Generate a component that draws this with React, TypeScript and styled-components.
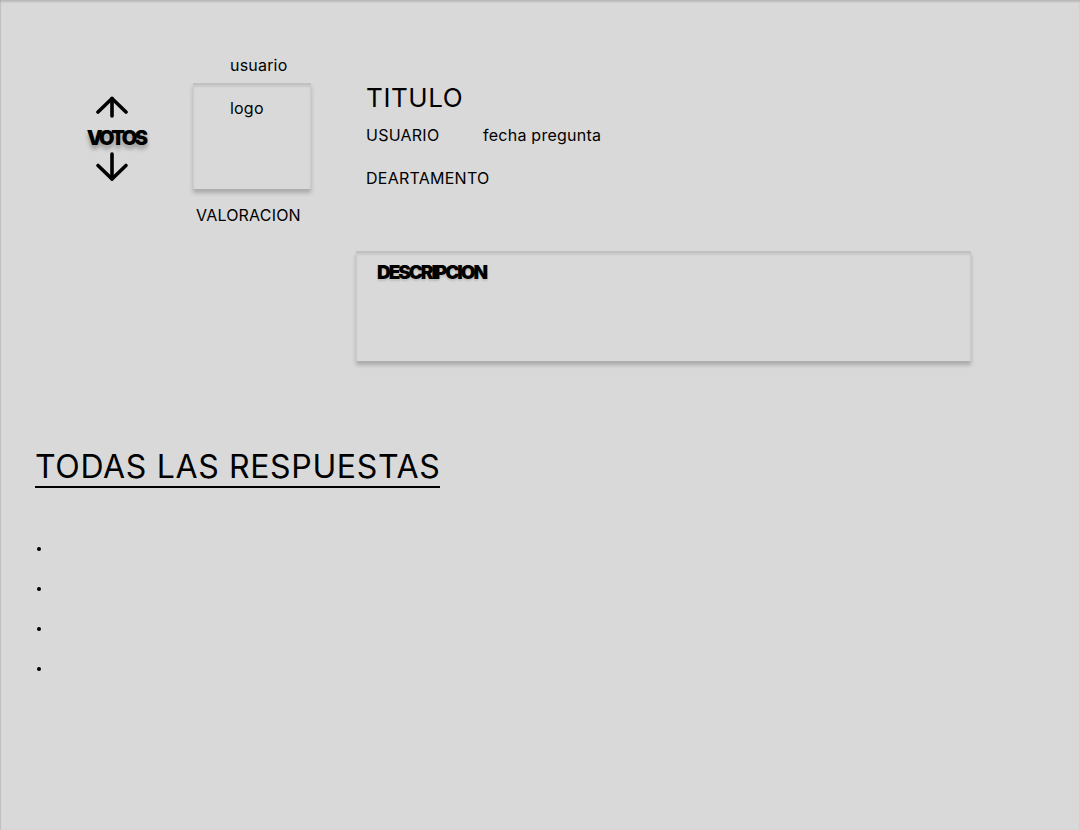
import styled, { createGlobalStyle } from 'styled-components';

const GlobalStyle = createGlobalStyle`
  html, body {
    margin: 0;
    padding: 0;
    background: #d9d9d9;
  }
  body {
    font-family: Inter, "Noto Sans", sans-serif;
    color: #000;
  }
`;

const Page = styled.div`
  width: 1080px;
  height: 830px;
  box-sizing: border-box;
  padding-top: 56px;
  background: #d9d9d9;
  box-shadow: inset 0 2px 2px rgba(0, 0, 0, 0.14), inset 1px 0 1px rgba(0, 0, 0, 0.08);
  overflow: hidden;
`;

const Header = styled.div`
  display: flex;
  align-items: flex-start;
`;

const VoteColumn = styled.div`
  display: flex;
  flex-direction: column;
  align-items: center;
  margin: 40px 0 0 82px;
  width: 60px;
`;

const VoteLabel = styled.span`
  font-size: 20px;
  font-weight: 900;
  letter-spacing: -2.6px;
  line-height: 24px;
  margin: 8px 0 2px 8px;
  text-shadow: 0 4px 4px rgba(0, 0, 0, 0.3);
`;

const UserColumn = styled.div`
  display: flex;
  flex-direction: column;
  margin-left: 51px;
  width: 118px;
`;

const SmallText = styled.span<{ $indent?: number }>`
  font-size: 16px;
  line-height: 19px;
  letter-spacing: 0.2px;
  padding-left: ${({ $indent }) => $indent ?? 0}px;
`;

const LogoBox = styled.div`
  box-sizing: border-box;
  height: 106px;
  margin-top: 8px;
  padding: 16px 0 0 37px;
  font-size: 16px;
  line-height: 19px;
  letter-spacing: 0.2px;
  box-shadow: 0 4px 4px rgba(0, 0, 0, 0.22), inset 0 3px 3px rgba(0, 0, 0, 0.12);
`;

const Rating = styled(SmallText)`
  margin-top: 17px;
`;

const InfoColumn = styled.div`
  display: flex;
  flex-direction: column;
  margin: 26px 0 0 55px;
`;

const Title = styled.h1`
  margin: 0;
  font-size: 26px;
  font-weight: 400;
  line-height: 31px;
  letter-spacing: 0.6px;
`;

const MetaRow = styled.div<{ $top: number }>`
  display: flex;
  margin-top: ${({ $top }) => $top}px;
  font-size: 16px;
  line-height: 19px;
  letter-spacing: 0.25px;
`;

const MetaKey = styled.span`
  width: 117px;
`;

const DescriptionBox = styled.div`
  box-sizing: border-box;
  width: 615px;
  height: 110px;
  margin: 26px 0 0 356px;
  padding: 10px 0 0 21px;
  box-shadow: 0 4px 4px rgba(0, 0, 0, 0.22), inset 0 3px 3px rgba(0, 0, 0, 0.12);
`;

const DescriptionLabel = styled.span`
  font-size: 19px;
  font-weight: 900;
  letter-spacing: -2.1px;
  line-height: 24px;
  text-shadow: 0 2px 2px rgba(0, 0, 0, 0.12);
`;

const Answers = styled.section`
  margin: 87px 0 0 35px;
`;

const AnswersTitle = styled.h2`
  display: inline-block;
  margin: 0;
  font-size: 32px;
  font-weight: 400;
  line-height: 38px;
  letter-spacing: 0.65px;
  border-bottom: 2px solid #000;
`;

const AnswerList = styled.ul`
  list-style: none;
  margin: 41px 0 0 2px;
  padding: 0;
`;

const AnswerItem = styled.li`
  display: flex;
  align-items: center;
  height: 40px;

  &::before {
    content: '';
    width: 4px;
    height: 4px;
    border-radius: 50%;
    background: #000;
  }
`;

const ArrowUp = () => (
  <svg width="34" height="22" viewBox="0 0 34 22" fill="none" stroke="#000" strokeWidth="3.6" strokeLinecap="round" strokeLinejoin="round">
    <path d="M3 16 L17 2.5 L31 16" />
    <path d="M17 2.5 V20" />
  </svg>
);

const ArrowDown = () => (
  <svg width="34" height="30" viewBox="0 0 34 30" fill="none" stroke="#000" strokeWidth="3.6" strokeLinecap="round" strokeLinejoin="round">
    <path d="M3 13.5 L17 27 L31 13.5" />
    <path d="M17 2 V27" />
  </svg>
);

export default function App() {
  return (
    <>
      <GlobalStyle />
      <Page>
        <Header>
          <VoteColumn>
            <ArrowUp />
            <VoteLabel>VOTOS</VoteLabel>
            <ArrowDown />
          </VoteColumn>

          <UserColumn>
            <SmallText $indent={37}>usuario</SmallText>
            <LogoBox>logo</LogoBox>
            <Rating $indent={3}>VALORACION</Rating>
          </UserColumn>

          <InfoColumn>
            <Title>TITULO</Title>
            <MetaRow $top={13}>
              <MetaKey>USUARIO</MetaKey>
              <span>fecha pregunta</span>
            </MetaRow>
            <MetaRow $top={24}>
              <span>DEARTAMENTO</span>
            </MetaRow>
          </InfoColumn>
        </Header>

        <DescriptionBox>
          <DescriptionLabel>DESCRIPCION</DescriptionLabel>
        </DescriptionBox>

        <Answers>
          <AnswersTitle>TODAS LAS RESPUESTAS</AnswersTitle>
          <AnswerList>
            <AnswerItem />
            <AnswerItem />
            <AnswerItem />
            <AnswerItem />
          </AnswerList>
        </Answers>
      </Page>
    </>
  );
}
